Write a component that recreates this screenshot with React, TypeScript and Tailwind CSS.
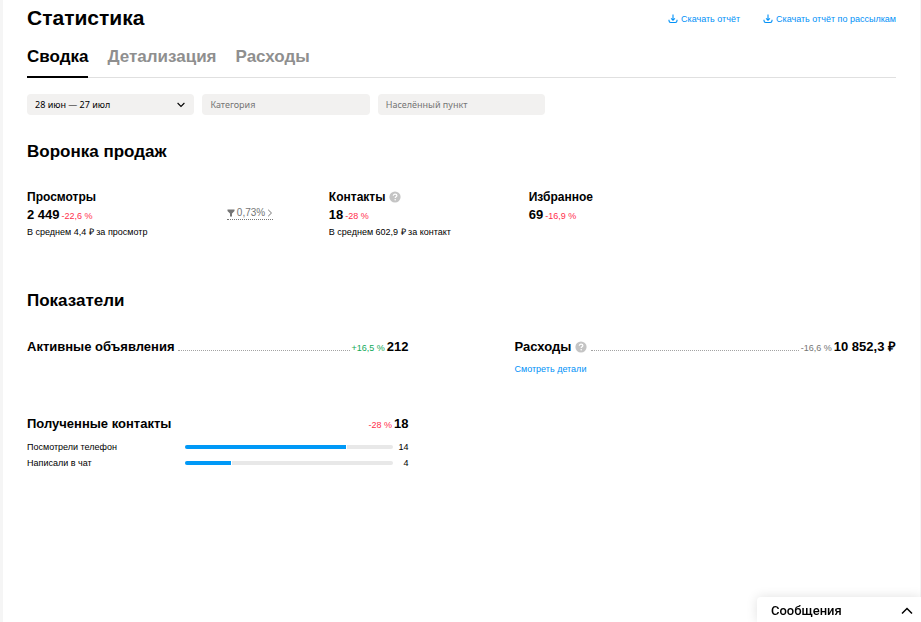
import { useState } from "react";
import type { ReactNode } from "react";
import clsx from "clsx";

const tabs = ["Сводка", "Детализация", "Расходы"];

const contacts = [
  { label: "Посмотрели телефон", value: 14 },
  { label: "Написали в чат", value: 4 },
];

const totalContacts = 18;

function DownloadIcon() {
  return (
    <svg viewBox="0 0 10 10" className="size-[10px]" fill="none" stroke="currentColor" strokeWidth="1.1">
      <path d="M5 0.5v5.6M3.1 4.4L5 6.3l1.9-1.9" />
      <path d="M1 5.8v1c0 1.1.7 1.7 1.7 1.7h4.6c1 0 1.7-.6 1.7-1.7v-1" />
    </svg>
  );
}

function HelpIcon() {
  return (
    <button type="button" aria-label="Подсказка" className="shrink-0">
      <svg viewBox="0 0 12 12" className="size-3" fill="none">
        <circle cx="6" cy="6" r="5.6" fill="#c4c4c4" />
        <path
          d="M4.3 4.8c0-1 .7-1.7 1.8-1.7s1.8.6 1.8 1.5c0 1.2-1.7 1.2-1.7 2.4"
          stroke="#fff"
          strokeWidth="1.2"
        />
        <circle cx="6.2" cy="8.7" r="0.8" fill="#fff" />
      </svg>
    </button>
  );
}

function DownloadLink({ children }: { children: ReactNode }) {
  return (
    <a href="#download" className="flex items-center gap-[3px] text-[9px] leading-3 text-[#0091f7]">
      <DownloadIcon />
      {children}
    </a>
  );
}

type DeltaProps = { value: string; tone: "up" | "down" | "neutral" };

function Delta({ value, tone }: DeltaProps) {
  return (
    <span
      className={clsx(
        "text-[9px] leading-3",
        tone === "up" && "text-[#0fa958]",
        tone === "down" && "text-[#ff2e4c]",
        tone === "neutral" && "text-[#757575]"
      )}
    >
      {value}
    </span>
  );
}

type FunnelStepProps = {
  title: string;
  value: string;
  delta: string;
  note?: string;
  help?: boolean;
  className?: string;
};

function FunnelStep({ title, value, delta, note, help, className }: FunnelStepProps) {
  return (
    <div className={className}>
      <div className="flex items-center gap-1">
        <h3 className="text-xs leading-[18px] font-bold">{title}</h3>
        {help && <HelpIcon />}
      </div>
      <p className="flex items-baseline gap-[2px]">
        <span className="text-[13px] leading-[18px] font-bold">{value}</span>
        <Delta value={delta} tone="down" />
      </p>
      {note && <p className="mt-[2px] text-[9px] leading-3">{note}</p>}
    </div>
  );
}

type MetricProps = DeltaProps & {
  title: string;
  total: string;
  help?: boolean;
  dotted?: boolean;
};

function MetricHeader({ title, total, value, tone, help, dotted }: MetricProps) {
  return (
    <div className="flex items-baseline">
      <div className="flex items-center gap-1">
        <h3 className="text-[13px] leading-5 font-bold">{title}</h3>
        {help && <HelpIcon />}
      </div>
      <span
        className={clsx("mr-[2px] ml-1 flex-1", dotted && "border-b border-dotted border-[#a3a3a3]")}
      />
      <Delta value={value} tone={tone} />
      <span className="ml-[2px] text-[13px] leading-5 font-bold">{total}</span>
    </div>
  );
}

export default function App() {
  const [activeTab, setActiveTab] = useState("Сводка");
  const [chatOpen, setChatOpen] = useState(false);

  return (
    <div className="min-h-screen bg-[#f5f5f5] pr-px pl-[3px] font-['Liberation_Sans',Arial,sans-serif] text-black">
      <main className="min-h-screen bg-white px-6 pt-1">
        <header className="flex items-center justify-between">
          <h1 className="text-[21px] leading-7 font-bold">Статистика</h1>
          <div className="flex gap-[23px] pt-px">
            <DownloadLink>Скачать отчёт</DownloadLink>
            <DownloadLink>Скачать отчёт по рассылкам</DownloadLink>
          </div>
        </header>

        <nav className="mt-[11px] flex gap-[19px] border-b border-[#e0e0e0]">
          {tabs.map((tab) => (
            <button
              key={tab}
              type="button"
              onClick={() => setActiveTab(tab)}
              className={clsx(
                "-mb-px border-b-2 pt-[2px] pb-[7px] text-[17px] leading-6 font-bold",
                activeTab === tab ? "border-black" : "border-transparent text-[#8f8f8f]"
              )}
            >
              {tab}
            </button>
          ))}
        </nav>

        <div className="mt-4 grid grid-cols-5 gap-2 font-['Noto_Sans',sans-serif] text-[9px] leading-3">
          <div className="relative">
            <select
              aria-label="Период"
              className="h-[21px] w-full appearance-none rounded bg-[#f2f1f0] px-2"
            >
              <option>28 июн — 27 июл</option>
            </select>
            <svg
              viewBox="0 0 8 6"
              className="pointer-events-none absolute top-2 right-[9px] h-[6px] w-2"
              fill="none"
              stroke="currentColor"
              strokeWidth="1.1"
            >
              <path d="M0.6 1L4 4.4 7.4 1" />
            </svg>
          </div>
          <input
            aria-label="Категория"
            placeholder="Категория"
            className="h-[21px] w-full rounded bg-[#f2f1f0] px-2 placeholder:text-[#757575]"
          />
          <input
            aria-label="Населённый пункт"
            placeholder="Населённый пункт"
            className="h-[21px] w-full rounded bg-[#f2f1f0] px-2 placeholder:text-[#757575]"
          />
        </div>

        <section className="mt-[25px]">
          <h2 className="text-[17px] leading-6 font-bold">Воронка продаж</h2>
          <div className="mt-6 flex">
            <FunnelStep
              title="Просмотры"
              value="2 449"
              delta="-22,6 %"
              note="В среднем 4,4 ₽ за просмотр"
              className="w-[23%]"
            />
            <div className="w-[102px] pt-[19px]">
              <button
                type="button"
                className="flex items-center gap-[2px] border-b border-dotted border-[#757575] text-[10px] leading-3 text-[#757575]"
              >
                <svg viewBox="0 0 8 8" className="size-2" fill="currentColor">
                  <path d="M0.5 0.5h7v1.6L5 4.6v3H3v-3L0.5 2.1z" />
                </svg>
                0,73%
                <svg viewBox="0 0 6 8" className="h-2 w-[6px]" fill="none" stroke="currentColor">
                  <path d="M1.2 0.8L4.5 4 1.2 7.2" />
                </svg>
              </button>
            </div>
            <FunnelStep
              title="Контакты"
              value="18"
              delta="-28 %"
              note="В среднем 602,9 ₽ за контакт"
              help
              className="w-[23%]"
            />
            <FunnelStep title="Избранное" value="69" delta="-16,9 %" />
          </div>
        </section>

        <section className="mt-[51px]">
          <h2 className="text-[17px] leading-6 font-bold">Показатели</h2>
          <div className="mt-6 grid grid-cols-2 gap-x-[106px] gap-y-[37px]">
            <MetricHeader title="Активные объявления" total="212" value="+16,5 %" tone="up" dotted />
            <div>
              <MetricHeader
                title="Расходы"
                total="10 852,3 ₽"
                value="-16,6 %"
                tone="neutral"
                help
                dotted
              />
              <a href="#details" className="mt-1 block text-[9px] leading-4 text-[#0091f7]">
                Смотреть детали
              </a>
            </div>
            <div>
              <MetricHeader title="Полученные контакты" total="18" value="-28 %" tone="down" />
              <ul className="mt-[5px]">
                {contacts.map((item) => (
                  <li key={item.label} className="flex items-center text-[9px] leading-4">
                    <span className="w-[158px]">{item.label}</span>
                    <span className="h-1 flex-1 overflow-hidden rounded-full bg-[#e8e8e8]">
                      <span
                        className="box-content block h-full border-r border-white bg-[#0099f7]"
                        style={{ width: `${(item.value / totalContacts) * 100}%` }}
                      />
                    </span>
                    <span className="w-4 text-right">{item.value}</span>
                  </li>
                ))}
              </ul>
            </div>
          </div>
        </section>
      </main>

      <button
        type="button"
        aria-expanded={chatOpen}
        onClick={() => setChatOpen(!chatOpen)}
        className="fixed right-0 bottom-0 flex h-[25px] w-[164px] items-center justify-between rounded-tl bg-white pt-[2px] pr-2 pl-[14px] font-['Roboto',sans-serif] text-[13px] leading-4 font-medium shadow-[0_0_12px_rgba(0,0,0,0.12)]"
      >
        Сообщения
        <svg viewBox="0 0 12 8" className="h-2 w-3" fill="none" stroke="currentColor" strokeWidth="1.5">
          <path d="M1 6.5l5-5 5 5" />
        </svg>
      </button>
    </div>
  );
}
